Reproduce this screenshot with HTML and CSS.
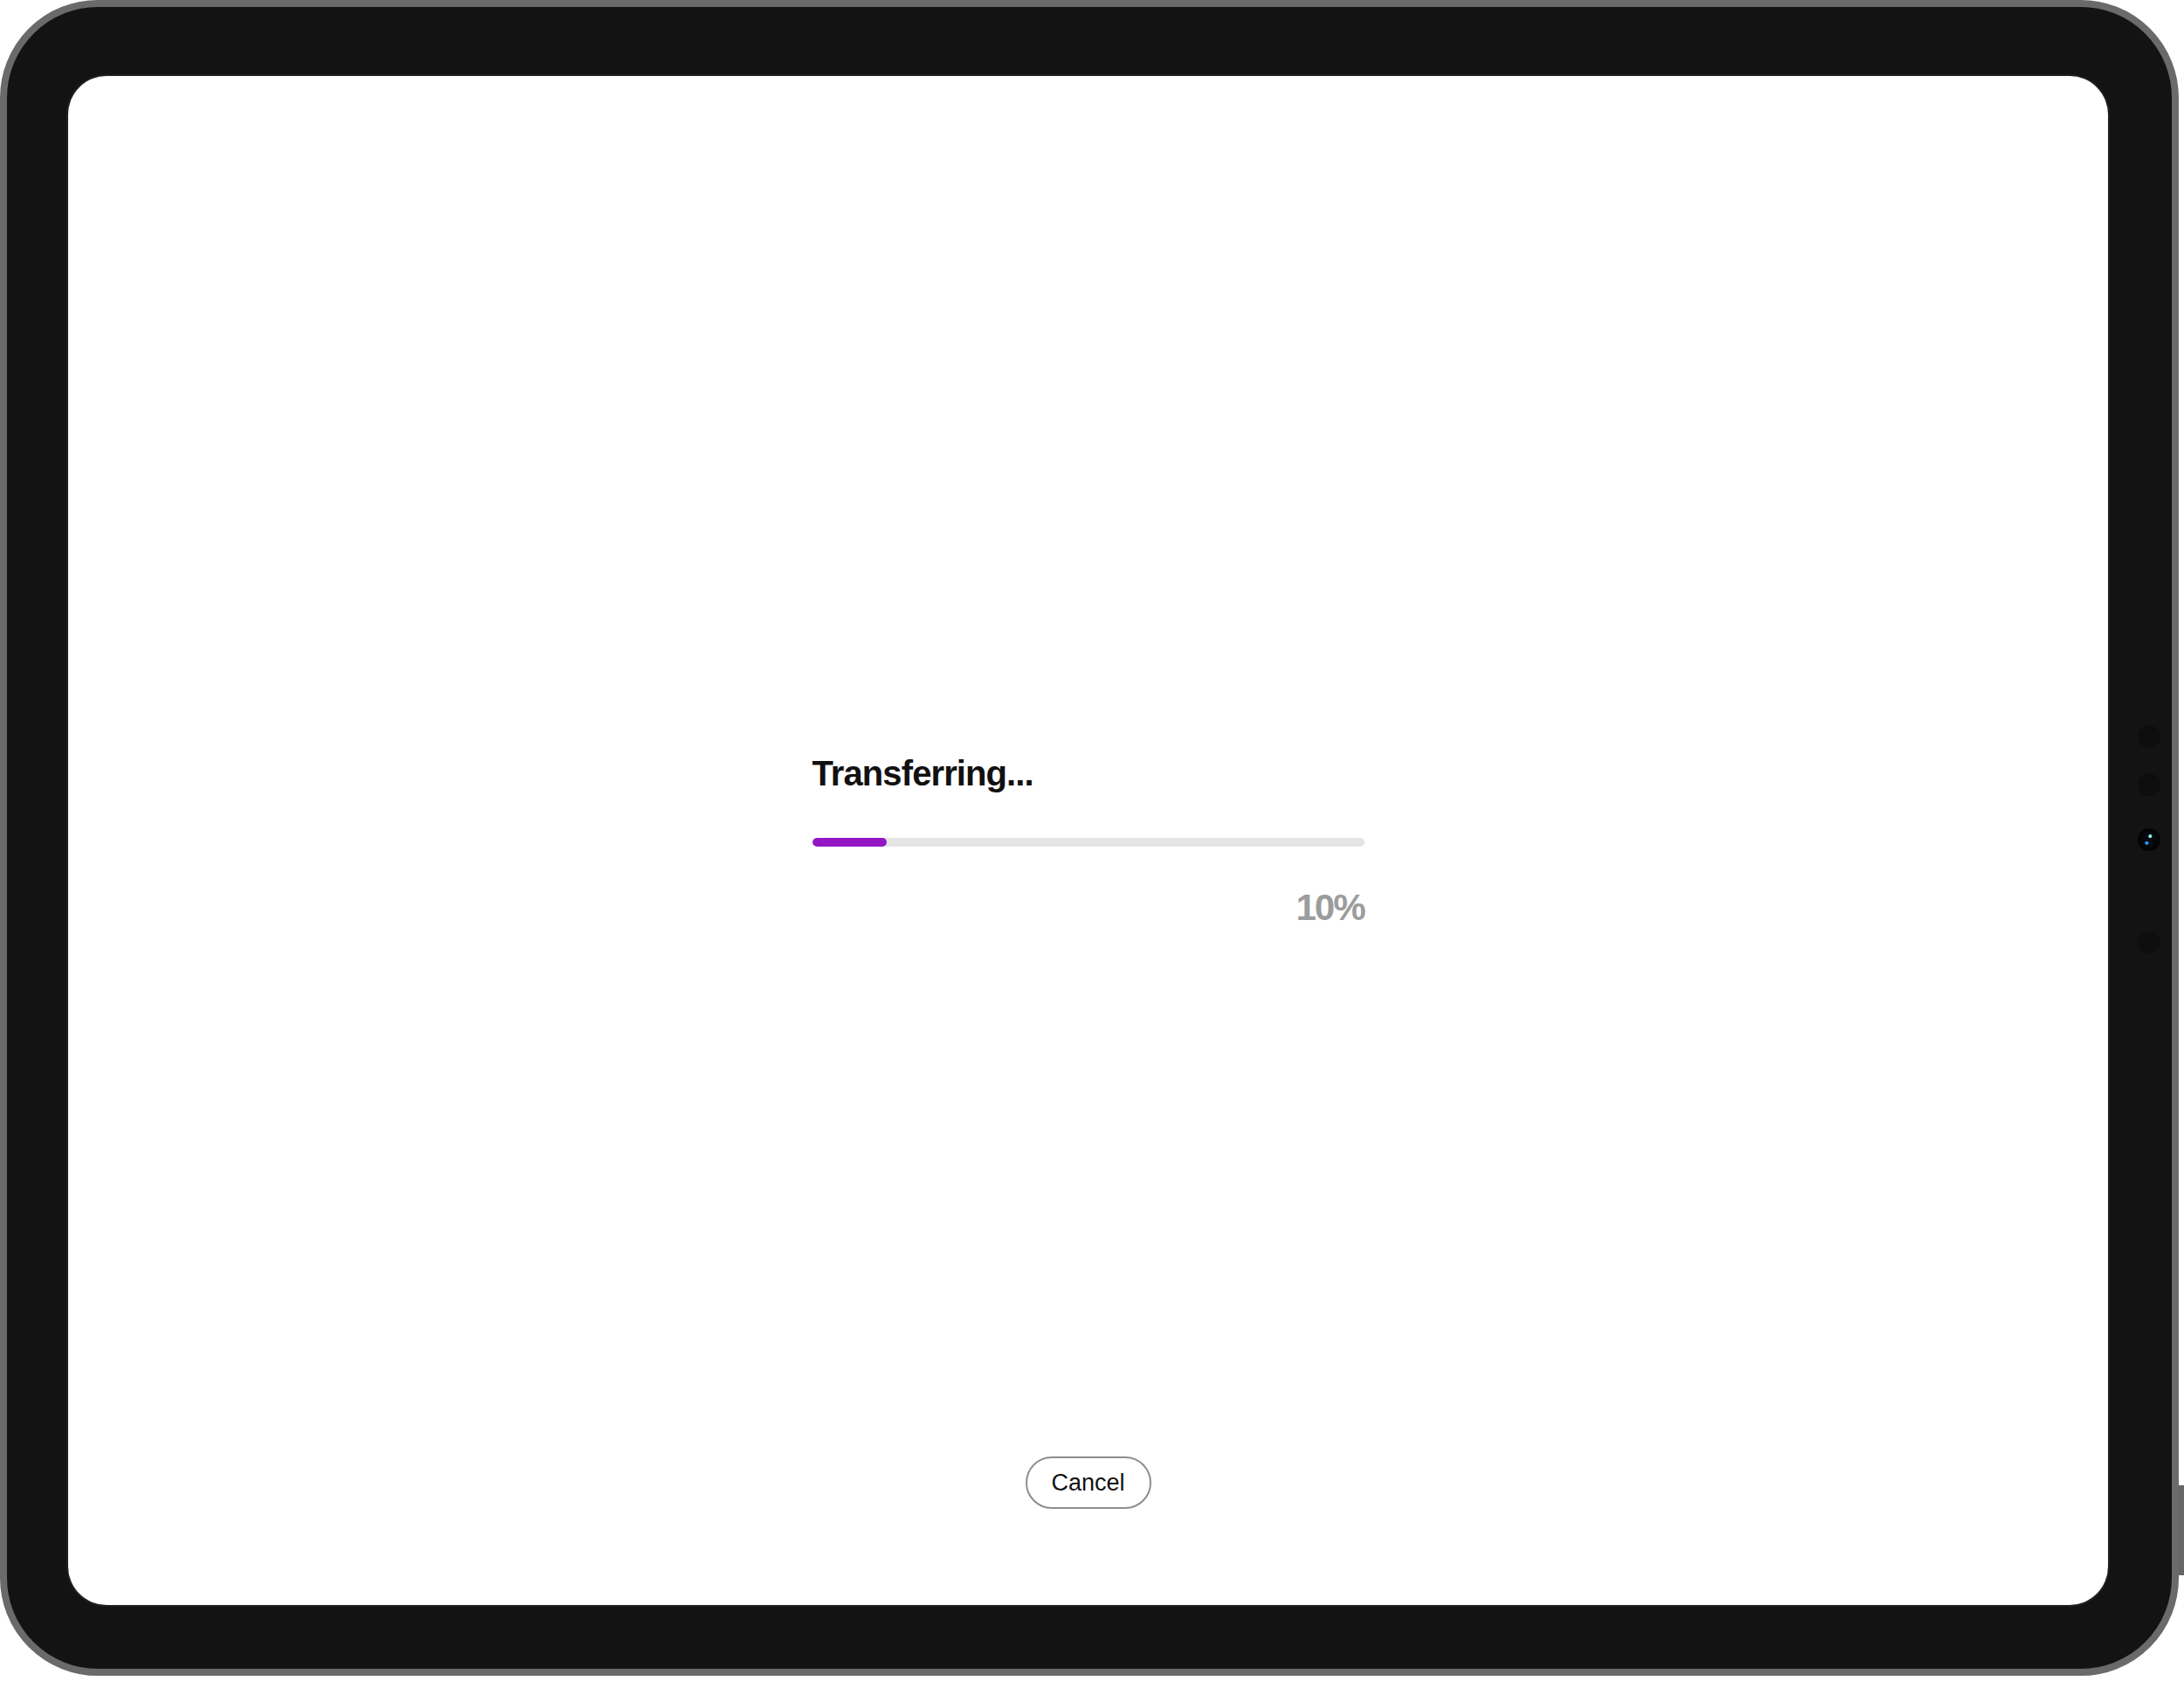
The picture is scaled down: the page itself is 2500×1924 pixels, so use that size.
FILE: index.html
```html
<!DOCTYPE html>
<html lang="en">
<head>
  <meta charset="utf-8">
  <title>Transfer</title>
  <link rel="stylesheet" href="styles.css">
</head>
<body>
  <div class="tablet">
    <!-- bezel sensors and camera -->
    <div class="sensors">
      <span class="sensor s1"></span>
      <span class="sensor s2"></span>
      <span class="sensor camera"></span>
      <span class="sensor s4"></span>
    </div>
    <span class="side-btn"></span>
    <span class="vol-btn vol-a"></span>
    <span class="vol-btn vol-b"></span>

    <div class="screen">
      <div class="transfer">
        <h2 class="transfer-title">Transferring...</h2>
        <div class="progress-track">
          <div class="progress-fill" style="width: 13.5%"></div>
        </div>
        <div class="progress-pct">10%</div>
      </div>
      <div class="footer">
        <button class="cancel-btn">Cancel</button>
      </div>
    </div>
  </div>
</body>
</html>
```

FILE: styles.css
```css
body { margin: 0; background: #fff; font-family: "Liberation Sans", Arial, sans-serif; }

.tablet {
  position: relative;
  box-sizing: border-box;
  width: 2494px;
  height: 1918px;
  border: 8px solid #6a6a6a;
  border-radius: 112px;
  background: #131313;
  padding: 79px 73px 73px 70px;
  display: flex;
}

.screen {
  flex: 1;
  background: #fff;
  border-radius: 44px;
  box-shadow: 0 0 0 2px #1e2024;
  display: flex;
  flex-direction: column;
}

/* camera column on the right bezel */
.sensors { position: absolute; right: 13px; top: 822px; display: flex; flex-direction: column; }
.sensor { display: block; width: 26px; height: 26px; border-radius: 50%; background: #0e0e0e; }
.s2 { margin-top: 29px; }
.camera {
  margin-top: 37px;
  background: radial-gradient(circle at 55% 35%, #8fd 0 1.5px, transparent 2.5px),
              radial-gradient(circle at 40% 65%, #29f 0 1.5px, transparent 2.5px),
              radial-gradient(circle, #0a0d18 0, #030303 70%);
}
.s4 { margin-top: 92px; }

.side-btn { position: absolute; right: -14px; top: 1692px; width: 6px; height: 103px; background: #666; }
.vol-btn { position: absolute; bottom: -14px; width: 86px; height: 6px; background: #666; }
.vol-a { left: 2125px; }
.vol-b { left: 2227px; }

.transfer {
  flex: 1;
  display: flex;
  flex-direction: column;
  justify-content: center;
  width: 632px;
  margin: 0 auto;
  padding-top: 170px;
}

.transfer-title {
  margin: 0;
  font-size: 40px;
  line-height: 48px;
  font-weight: 700;
  letter-spacing: -0.9px;
  color: #111;
}

.progress-track { height: 10px; margin-top: 50px; border-radius: 5px; background: #e4e4e4; overflow: hidden; }
.progress-fill { height: 100%; border-radius: 5px; background: #9415c6; }

.progress-pct {
  margin-top: 45px;
  text-align: right;
  font-size: 42px;
  line-height: 50px;
  font-weight: 700;
  letter-spacing: -2px;
  color: #9c9c9c;
}

.footer { display: flex; justify-content: center; padding-bottom: 110px; }

.cancel-btn {
  width: 144px;
  height: 60px;
  border: 2px solid #8e8e8e;
  border-radius: 30px;
  background: #fff;
  font-family: inherit;
  font-size: 27px;
  color: #111;
}
```
